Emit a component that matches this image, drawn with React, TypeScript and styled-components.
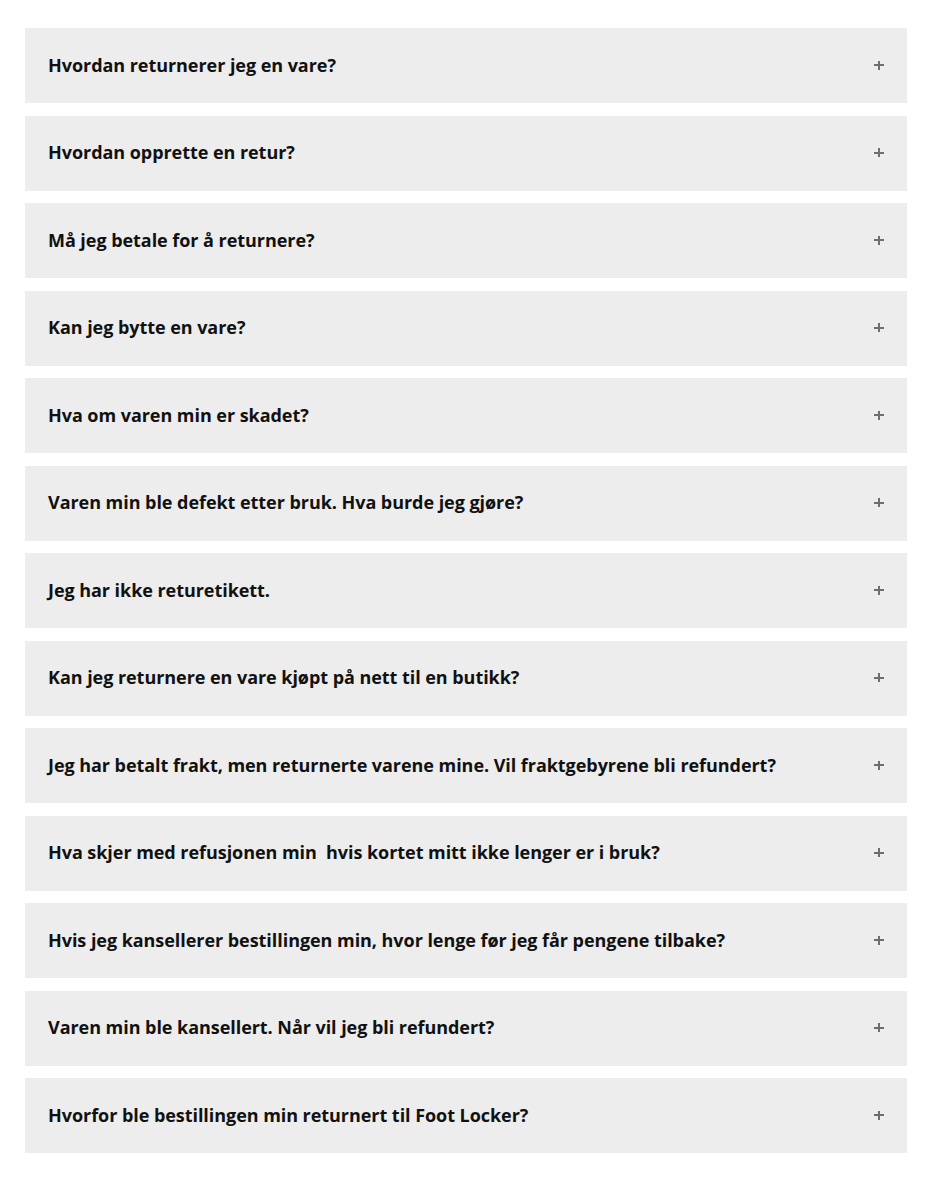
import React from "react";
import styled, { createGlobalStyle } from "styled-components";

const GlobalStyle = createGlobalStyle`
  html, body {
    margin: 0;
    padding: 0;
    background: #ffffff;
  }
  body {
    font-family: "Open Sans", "Noto Sans", sans-serif;
  }
`;

const Page = styled.div`
  padding: 28px 23px 34px 25px;
`;

const List = styled.ul`
  list-style: none;
  margin: 0;
  padding: 0;
  display: flex;
  flex-direction: column;
  gap: 12.5px;
`;

const Item = styled.li`
  background: #ededed;
  height: 75px;
  display: flex;
  align-items: center;
  justify-content: space-between;
  padding: 0 23px 2px 23px;
  box-sizing: border-box;
  cursor: pointer;
`;

const Question = styled.span`
  font-family: "Open Sans", "Noto Sans", sans-serif;
  font-weight: 700;
  font-size: 18px;
  line-height: 24px;
  letter-spacing: -0.05px;
  color: #111111;
  white-space: pre;
`;

const Plus = styled.span`
  position: relative;
  width: 10px;
  height: 9px;
  flex: none;
  margin-top: 1px;
  &::before,
  &::after {
    content: "";
    position: absolute;
    background: #6e6e6e;
  }
  &::before {
    left: 0;
    right: 0;
    top: 3.5px;
    height: 2px;
  }
  &::after {
    top: 0;
    bottom: 0;
    left: 4px;
    width: 2px;
  }
`;

const questions = [
  "Hvordan returnerer jeg en vare?",
  "Hvordan opprette en retur?",
  "Må jeg betale for å returnere?",
  "Kan jeg bytte en vare?",
  "Hva om varen min er skadet?",
  "Varen min ble defekt etter bruk. Hva burde jeg gjøre?",
  "Jeg har ikke returetikett.",
  "Kan jeg returnere en vare kjøpt på nett til en butikk?",
  "Jeg har betalt frakt, men returnerte varene mine. Vil fraktgebyrene bli refundert?",
  "Hva skjer med refusjonen min  hvis kortet mitt ikke lenger er i bruk?",
  "Hvis jeg kansellerer bestillingen min, hvor lenge før jeg får pengene tilbake?",
  "Varen min ble kansellert. Når vil jeg bli refundert?",
  "Hvorfor ble bestillingen min returnert til Foot Locker?",
];

export default function App() {
  return (
    <>
      <GlobalStyle />
      <Page>
        <List>
          {questions.map((q) => (
            <Item key={q}>
              <Question>{q}</Question>
              <Plus aria-hidden="true" />
            </Item>
          ))}
        </List>
      </Page>
    </>
  );
}
